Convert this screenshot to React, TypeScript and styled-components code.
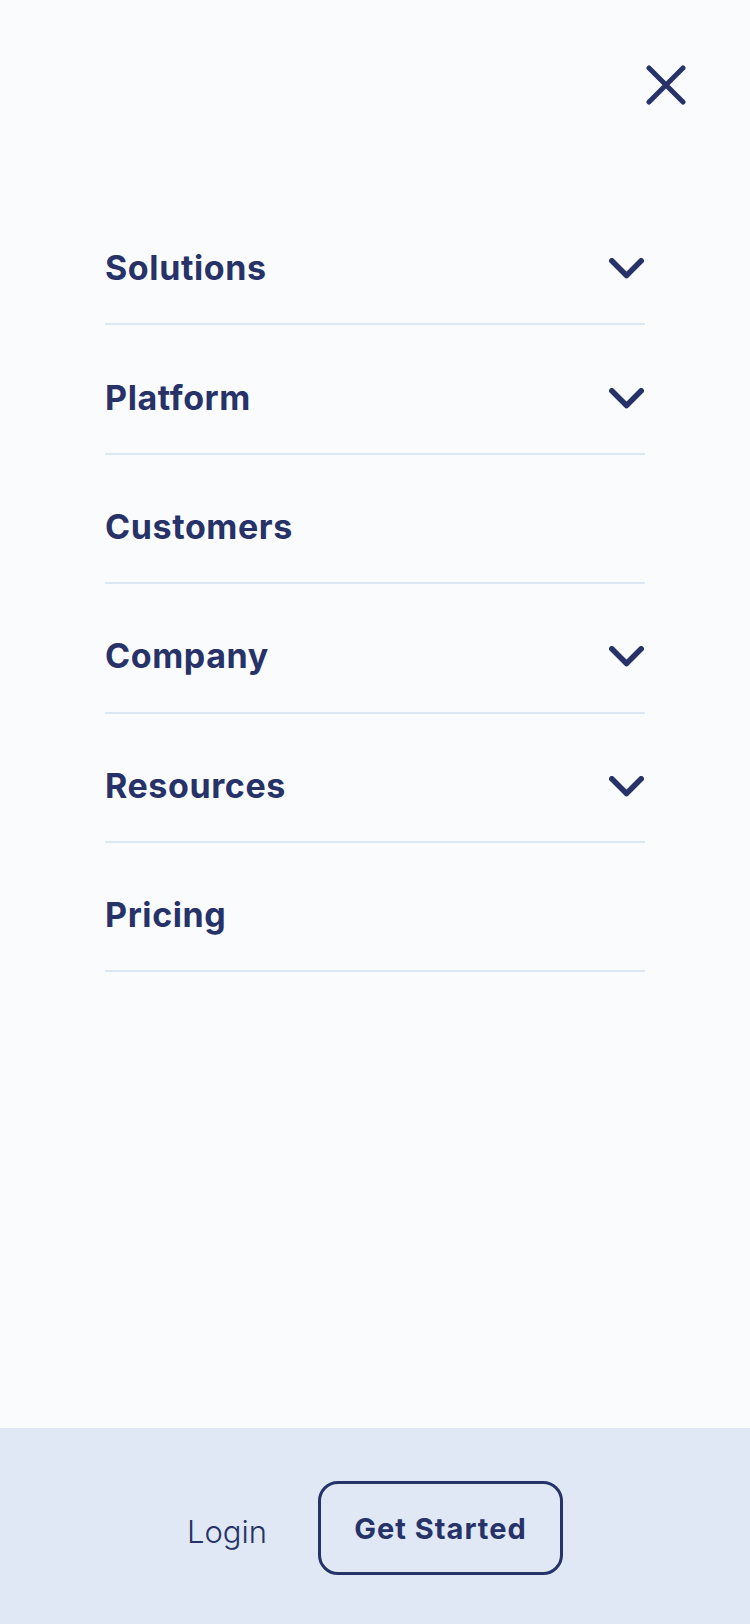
import React from "react";
import styled, { createGlobalStyle } from "styled-components";

const NAVY = "#263268";

const GlobalStyle = createGlobalStyle`
  html, body {
    margin: 0;
    padding: 0;
    background: #f9fbfd;
  }
  * { box-sizing: border-box; }
`;

const Page = styled.div`
  min-height: 1624px;
  display: flex;
  flex-direction: column;
  background: #f9fbfd;
  color: ${NAVY};
`;

const Header = styled.header`
  display: flex;
  justify-content: flex-end;
  padding: 65px 64px 0 0;
`;

const IconButton = styled.button`
  width: 40px;
  height: 40px;
  padding: 0;
  border: none;
  background: transparent;
  display: flex;
  align-items: center;
  justify-content: center;
  cursor: pointer;
`;

const Nav = styled.nav`
  flex: 1;
  padding: 91px 105px 0 105px;
  display: flex;
  flex-direction: column;
`;

const Row = styled.div`
  height: 129.4px;
  padding-top: 17px;
  display: flex;
  align-items: center;
  justify-content: space-between;
  border-bottom: 2px solid #dde7f3;
`;

const Label = styled.span`
  font-family: Inter, sans-serif;
  font-weight: 700;
  font-size: 34px;
  line-height: 40px;
  letter-spacing: 0.6px;
`;

const ChevronWrap = styled.span`
  display: flex;
  margin-right: 1px;
  margin-top: 1px;
`;

const Footer = styled.footer`
  height: 196px;
  background: #dfe8f4;
  display: flex;
  align-items: center;
  justify-content: center;
  gap: 51px;
  padding-top: 4px;
`;

const LoginLink = styled.a`
  font-family: Inter, sans-serif;
  font-weight: 300;
  font-size: 31px;
  color: ${NAVY};
  text-decoration: none;
  margin-top: 6px;
`;

const StartButton = styled.button`
  width: 245px;
  height: 94px;
  border: 3px solid ${NAVY};
  border-radius: 20px;
  background: transparent;
  color: ${NAVY};
  font-family: Inter, sans-serif;
  font-weight: 700;
  font-size: 29px;
  letter-spacing: 1px;
  display: flex;
  align-items: center;
  justify-content: center;
  padding: 0;
  cursor: pointer;
`;

const Chevron = () => (
  <svg width="35" height="21" viewBox="0 0 35 21" fill="none">
    <polyline
      points="2.8,2.8 17.5,17.5 32.2,2.8"
      stroke={NAVY}
      strokeWidth="5.5"
      strokeLinecap="round"
      strokeLinejoin="round"
    />
  </svg>
);

const CloseIcon = () => (
  <svg width="40" height="40" viewBox="0 0 40 40" fill="none">
    <path
      d="M3 3 L37 37 M37 3 L3 37"
      stroke={NAVY}
      strokeWidth="5"
      strokeLinecap="round"
    />
  </svg>
);

const items: { label: string; expandable: boolean }[] = [
  { label: "Solutions", expandable: true },
  { label: "Platform", expandable: true },
  { label: "Customers", expandable: false },
  { label: "Company", expandable: true },
  { label: "Resources", expandable: true },
  { label: "Pricing", expandable: false },
];

export default function App() {
  return (
    <>
      <GlobalStyle />
      <Page>
        <Header>
          <IconButton aria-label="Close menu">
            <CloseIcon />
          </IconButton>
        </Header>
        <Nav>
          {items.map((item) => (
            <Row key={item.label}>
              <Label>{item.label}</Label>
              {item.expandable && (
                <ChevronWrap>
                  <Chevron />
                </ChevronWrap>
              )}
            </Row>
          ))}
        </Nav>
        <Footer>
          <LoginLink href="#">Login</LoginLink>
          <StartButton>Get Started</StartButton>
        </Footer>
      </Page>
    </>
  );
}
